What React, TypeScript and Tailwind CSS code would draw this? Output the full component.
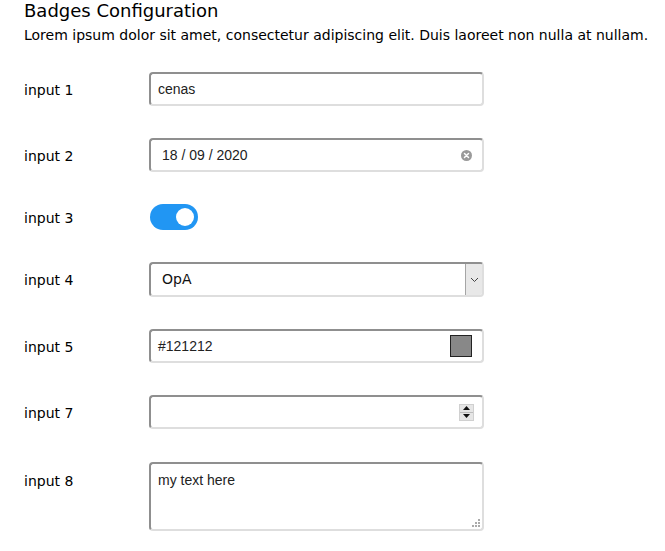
import type { ReactNode } from "react";

const boxClass =
  "relative flex items-center w-[335px] bg-white rounded-[4px] border-2 border-t-[#8f8f8f] border-l-[#8f8f8f] border-r-[#dedede] border-b-[#dedede]";

const Row = ({ label, children, top = false, className = "" }: { label: string; children: ReactNode; top?: boolean; className?: string }) => (
  <div className={`flex ${top ? "items-start" : "items-center"} ${className}`}>
    <div className={`w-[125px] shrink-0 text-[14px] text-black ${top ? "pt-[9px]" : "pt-[2px]"}`}>{label}</div>
    {children}
  </div>
);

export default function App() {
  return (
    <div className="bg-white min-h-[551px] pl-[24px] pt-0 font-['DejaVu_Sans',Verdana,sans-serif] text-black">
      <h1 className="text-[18px] leading-[22px] pt-0">Badges Configuration</h1>
      <p className="text-[14px] leading-[20px] mt-[3px]">
        Lorem ipsum dolor sit amet, consectetur adipiscing elit. Duis laoreet non nulla at nullam.
      </p>

      <div className="mt-[27px]">
        {/* input 1 */}
        <Row label="input 1">
          <div className={`${boxClass} h-[34px]`}>
            <span className="pl-[7px] text-[14px] font-['Liberation_Sans',Arial,sans-serif] text-[#222]">cenas</span>
          </div>
        </Row>

        {/* input 2 - date */}
        <Row label="input 2" className="mt-[32px]">
          <div className={`${boxClass} h-[34px] justify-between`}>
            <span className="pl-[11px] text-[14px] font-['Liberation_Sans',Arial,sans-serif] text-[#222]">18 / 09 / 2020</span>
            <svg width="11" height="11" viewBox="0 0 12 12" className="mr-[10px]">
              <circle cx="6" cy="6" r="6" fill="#9a9a9a" />
              <path d="M3.8 3.8 L8.2 8.2 M8.2 3.8 L3.8 8.2" stroke="#fff" strokeWidth="1.6" strokeLinecap="round" />
            </svg>
          </div>
        </Row>

        {/* input 3 - toggle */}
        <Row label="input 3" className="mt-[32px]">
          <div className="ml-[1px] w-[48px] h-[26px] rounded-full bg-[#2196f3] flex items-center justify-end pr-[4px]">
            <div className="w-[18px] h-[18px] rounded-full bg-white" />
          </div>
        </Row>

        {/* input 4 - select */}
        <Row label="input 4" className="mt-[32px]">
          <div className={`${boxClass} h-[35px] justify-between overflow-hidden`}>
            <span className="pl-[11px] text-[14px] text-[#111]">OpA</span>
            <div className="h-full w-[17px] bg-[#e8e8e8] border-l border-[#a5a5a5] flex items-center justify-center">
              <svg width="9" height="6" viewBox="0 0 9 6">
                <path d="M1 1 L4.5 4.5 L8 1" fill="none" stroke="#444" strokeWidth="1" />
              </svg>
            </div>
          </div>
        </Row>

        {/* input 5 - color */}
        <Row label="input 5" className="mt-[32px]">
          <div className={`${boxClass} h-[34px] justify-between`}>
            <span className="pl-[7px] text-[14px] font-['Liberation_Sans',Arial,sans-serif] text-[#222]">#121212</span>
            <div className="mr-[10px] w-[22px] h-[22px] bg-[#888888] border border-[#222]" />
          </div>
        </Row>

        {/* input 7 - number */}
        <Row label="input 7" className="mt-[32px]">
          <div className={`${boxClass} h-[34px] justify-end`}>
            <div className="mr-[8px] w-[15px] h-[17px] flex flex-col bg-[#e6e6e6] border border-[#d0d0d0]">
              <div className="flex-1 flex items-center justify-center border-b border-[#bdbdbd]">
                <svg width="7" height="4" viewBox="0 0 7 4"><path d="M0 4 L3.5 0 L7 4 Z" fill="#111" /></svg>
              </div>
              <div className="flex-1 flex items-center justify-center">
                <svg width="7" height="4" viewBox="0 0 7 4"><path d="M0 0 L3.5 4 L7 0 Z" fill="#111" /></svg>
              </div>
            </div>
          </div>
        </Row>

        {/* input 8 - textarea */}
        <Row label="input 8" top className="mt-[33px]">
          <div className={`${boxClass} h-[69px] items-start`}>
            <span className="pl-[7px] pt-[8px] text-[14px] leading-[16px] font-['Liberation_Sans',Arial,sans-serif] text-[#222]">my text here</span>
            <svg width="8" height="8" viewBox="0 0 8 8" className="absolute right-[2px] bottom-[2px]">
              <rect x="6" y="0" width="2" height="2" fill="#aaa" />
              <rect x="3" y="3" width="2" height="2" fill="#aaa" />
              <rect x="6" y="3" width="2" height="2" fill="#aaa" />
              <rect x="0" y="6" width="2" height="2" fill="#aaa" />
              <rect x="3" y="6" width="2" height="2" fill="#aaa" />
              <rect x="6" y="6" width="2" height="2" fill="#aaa" />
            </svg>
          </div>
        </Row>
      </div>
    </div>
  );
}
